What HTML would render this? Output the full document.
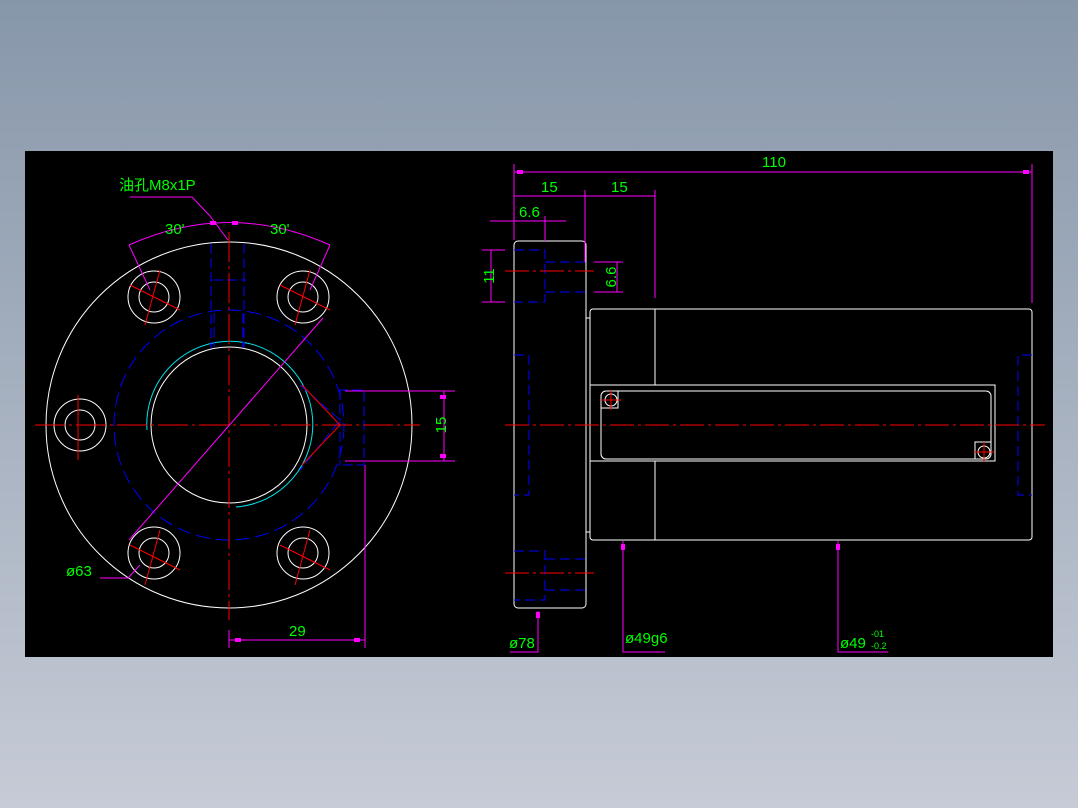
<!DOCTYPE html>
<html><head><meta charset="utf-8"><style>
html,body{margin:0;padding:0;width:1078px;height:808px;overflow:hidden;background:linear-gradient(#8797aa,#c6cbd6);}
svg{position:absolute;left:0;top:0}
text{font-family:"Liberation Sans","Noto Sans CJK SC",sans-serif;fill:#00ff00;font-size:15px}
</style></head><body>
<svg width="1078" height="808" viewBox="0 0 1078 808">
<rect x="25" y="151" width="1028" height="506" fill="#000"/>
<g fill="none" stroke-width="1">
<!-- LEFT VIEW -->
<g stroke="#fff">
<circle cx="229" cy="425" r="183"/>
<circle cx="229" cy="425" r="78"/>
<circle cx="154" cy="297" r="26"/><circle cx="154" cy="297" r="15"/>
<circle cx="303" cy="297" r="26"/><circle cx="303" cy="297" r="15"/>
<circle cx="80" cy="425" r="26"/><circle cx="80" cy="425" r="15"/>
<circle cx="154" cy="553" r="26"/><circle cx="154" cy="553" r="15"/>
<circle cx="303" cy="553" r="26"/><circle cx="303" cy="553" r="15"/>
</g>
<path d="M147 430 A83 83 0 1 1 236 507" stroke="#00e5ee"/>
<circle cx="229" cy="425" r="115" stroke="#0000ff" stroke-dasharray="14 6"/>
<g stroke="#0000ff" stroke-dasharray="10 4">
<path d="M211 244V348M244 244V348M213 280H246M214 313V347M243 313V347"/>
<path d="M338 390H364V465H338M340 390V465"/>
<path d="M300 385L340 420L300 470"/>
</g>
<g stroke="#ff0000" stroke-dasharray="30 4 3 4">
<path d="M35 425H420M229 232V620"/>
</g>
<g stroke="#ff0000">
<path d="M130 285L180 310M160 270L145 325M280 285L330 310M310 270L295 325M78 395V460M130 545L180 570M160 530L145 585M280 545L330 570M310 530L295 585"/>
<path d="M302 385L340 425L302 465"/>
</g>
<g stroke="#ff00ff">
<path d="M129 245Q229 200 330 245M129 245L150 290M330 245L310 290"/>
<path d="M129 540L323 318M100 578H128L140 565"/>
<path d="M130 197H192L210 216L228 240"/>
<path d="M345 391H455M345 461H455M444 391V461"/>
<path d="M229 630V648M365 465V648M229 640H365"/>
</g>
<!-- RIGHT VIEW -->
<g stroke="#fff">
<rect x="514" y="241" width="72" height="367" rx="4"/>
<rect x="590" y="309" width="442" height="231" rx="3"/>
<path d="M586 318H590M586 532H590M655 309V385M655 461V540"/>
<rect x="590" y="385" width="405" height="76"/>
<rect x="601" y="391" width="390" height="68" rx="5"/>
<circle cx="611" cy="400" r="6"/><circle cx="984" cy="452" r="6"/>
<path d="M601 408H618V391M975 459V442H991"/>
</g>
<g stroke="#0000ff" stroke-dasharray="10 5">
<path d="M514 250H545V302H514M545 262H586M545 292H586"/>
<path d="M514 551H545V600H514M545 559H586M545 590H586"/>
<path d="M514 355H529V495H514M1032 355H1018V495H1032"/>
</g>
<g stroke="#ff0000" stroke-dasharray="24 4 3 4">
<path d="M505 425H1045M505 271H594M505 573H594"/>
</g>
<g stroke="#ff0000"><path d="M601 400H621M611 390V410M974 452H994M984 442V462"/></g>
<g stroke="#ff00ff">
<path d="M514 164V240M1032 164V303M514 172H1032"/>
<path d="M585 190V262M655 190V298M514 196H655"/>
<path d="M490 221H566M545 216V241"/>
<path d="M482 250H505M482 302H505M491 250V302"/>
<path d="M594 262H623M594 292H623M617 262V292"/>
<path d="M538 611V652H510M623 541V652H665M838 541V652H888"/>
</g>
</g>
<g fill="#ff00ff">
<rect x="210" y="221" width="6" height="4"/><rect x="232" y="221" width="6" height="4"/>
<rect x="517" y="170" width="6" height="4"/><rect x="1023" y="170" width="6" height="4"/>
<rect x="440" y="395" width="6" height="4"/><rect x="440" y="454" width="6" height="4"/>
<rect x="235" y="638" width="6" height="4"/><rect x="354" y="638" width="6" height="4"/>
<rect x="536" y="612" width="4" height="6"/><rect x="621" y="544" width="4" height="6"/><rect x="836" y="544" width="4" height="6"/>
</g>
<text x="119" y="190">油孔M8x1P</text>
<text x="165" y="234">30'</text>
<text x="270" y="234">30'</text>
<text x="66" y="576">ø63</text>
<text x="289" y="636">29</text>
<text x="438" y="433" transform="rotate(-90 438 425)" text-anchor="middle">15</text>
<text x="762" y="167">110</text>
<text x="541" y="192">15</text>
<text x="611" y="192">15</text>
<text x="519" y="217">6.6</text>
<text x="488" y="282" transform="rotate(-90 488 276)" text-anchor="middle">11</text>
<text x="611" y="282" transform="rotate(-90 611 277)" text-anchor="middle">6.6</text>
<text x="509" y="648">ø78</text>
<text x="625" y="643">ø49g6</text>
<text x="840" y="648">ø49</text>
<text x="871" y="637" style="font-size:9px">-01</text>
<text x="871" y="649" style="font-size:9px">-0.2</text>
</svg>
</body></html>
